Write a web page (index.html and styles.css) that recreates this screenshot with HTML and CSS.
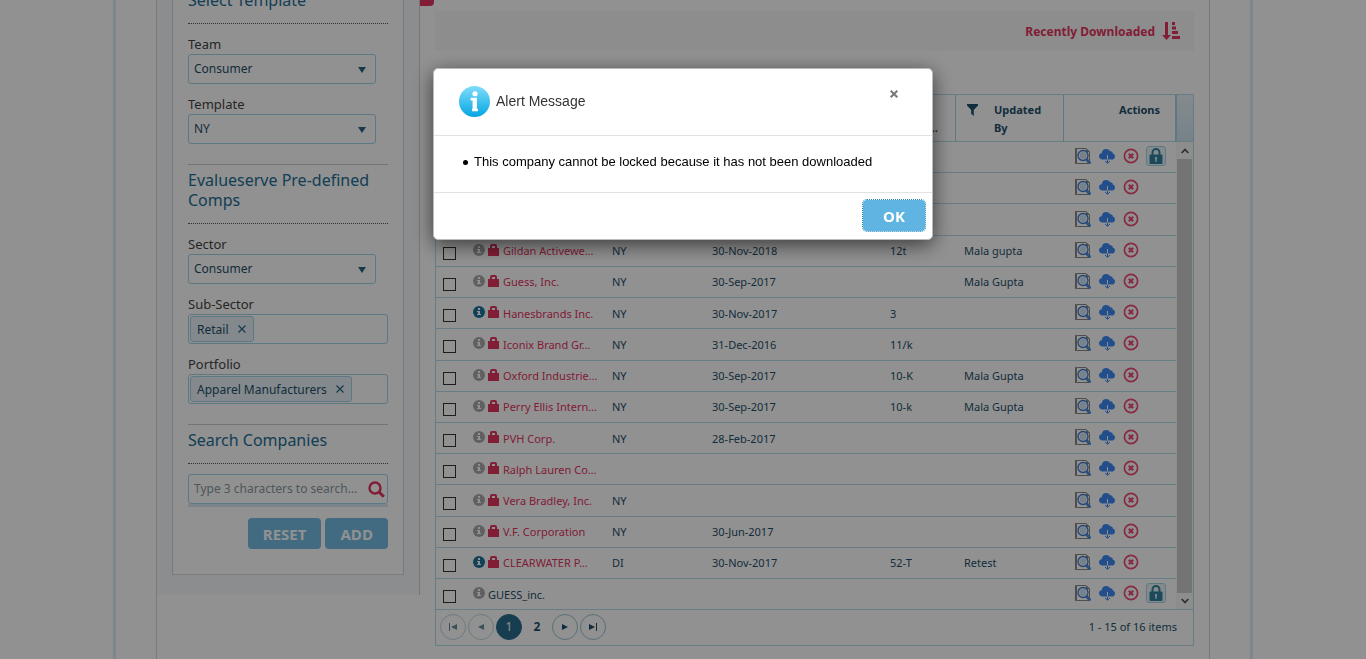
FILE: index.html
```html
<!DOCTYPE html>
<html lang="en">
<head>
<meta charset="utf-8">
<title>Company comps</title>
<link rel="stylesheet" href="styles.css">
</head>
<body>
<svg class="sprite" aria-hidden="true">
  <symbol id="info" viewBox="0 0 12 12"><circle cx="6" cy="6" r="6" fill="currentColor"/><path d="M5 2h2v2H5zM4 5h3v3h1v1H4V8h1V6H4z" fill="#fff"/></symbol>
  <symbol id="bag" viewBox="0 0 11 12"><path d="M0 4h2V2q0-2 2-2h3q2 0 2 2v2h2v8H0zM4 4h3V2H4z" fill="currentColor" fill-rule="evenodd"/></symbol>
  <symbol id="preview" viewBox="0 0 16 16"><path d="M1.500 .5H11l3.500 3.500v11.500H1.500z" fill="#fff" stroke="#8a8a8a" stroke-width="1"/><path d="M.500 0v16" stroke="#888" stroke-width="1"/><path d="M11 .500V4h4z" fill="#888"/><path d="M11.500 11.500l4 4" stroke="#4a8fd6" stroke-width="3"/><circle cx="8" cy="7.500" r="5" fill="#fff" stroke="#3b78d0" stroke-width="1.300"/><circle cx="8" cy="7.500" r="3.400" fill="#cfe3f6"/></symbol>
  <symbol id="cloud" viewBox="0 0 16 16"><path d="M3.500 11.500C1.500 11.500 0 10.300 0 8.300c0-1.700 1-2.800 2.700-3C3 2.500 4.800 1 7 1c2 0 3.300.8 4 2.300 1.500-.4 2.800.5 2.800 2.200C15.200 5.900 16 7 16 8.400c0 2-1.400 3.100-3.200 3.100z" fill="#3c8cf5"/><path d="M8.500 7v5" stroke="#fff" stroke-width="1"/><path d="M8.500 11.500v3.500M6 13l2.500 2.200L11 13" fill="none" stroke="#3c8cf5" stroke-width="1"/></symbol>
  <symbol id="remove" viewBox="0 0 16 16"><circle cx="8" cy="8" r="6.600" fill="none" stroke="#ee4c75" stroke-width="1.700"/><path d="M5.800 5.800l4.400 4.400m0-4.400l-4.400 4.400" stroke="#ee4c75" stroke-width="2.200"/></symbol>
  <symbol id="padlock" viewBox="0 0 14 16"><path d="M3.500 7V4.500a3.500 3.500 0 0 1 7 0V7" fill="none" stroke="#32829f" stroke-width="2"/><rect x=".5" y="6.500" width="13" height="9.500" rx="1" fill="#32829f"/><path d="M6 9h2v2l-.5 3h-1L6 11z" fill="#d9edf5"/></symbol>
</svg>

<div class="frame">
  <div class="page">
    <aside class="sidebar">
      <form class="panel">
        <section class="group first">
          <h2>Select Template</h2>
          <label for="team">Team</label>
          <div class="select"><select id="team"><option>Consumer</option></select></div>
          <label for="template">Template</label>
          <div class="select"><select id="template"><option>NY</option></select></div>
        </section>
        <section class="group">
          <h2>Evalueserve Pre-defined Comps</h2>
          <label for="sector">Sector</label>
          <div class="select"><select id="sector"><option>Consumer</option></select></div>
          <label for="subsector">Sub-Sector</label>
          <div class="chips"><span class="chip">Retail<button type="button" aria-label="Remove Retail"><svg viewBox="0 0 8 8"><path d="M.5.5l7 7m0-7l-7 7"/></svg></button></span><input id="subsector" type="text"></div>
          <label for="portfolio">Portfolio</label>
          <div class="chips"><span class="chip">Apparel Manufacturers<button type="button" aria-label="Remove Apparel Manufacturers"><svg viewBox="0 0 8 8"><path d="M.5.5l7 7m0-7l-7 7"/></svg></button></span><input id="portfolio" type="text"></div>
        </section>
        <section class="group">
          <h2>Search Companies</h2>
          <div class="search">
            <input type="text" placeholder="Type 3 characters to search…" aria-label="Search companies">
            <svg viewBox="0 0 17 17"><circle cx="7" cy="7" r="5.500" fill="none" stroke="#e4335f" stroke-width="2.400"/><path d="M11 11l4.800 4.800" stroke="#e4335f" stroke-width="3"/></svg>
          </div>
          <div class="buttons"><button type="button" class="btn">RESET</button><button type="button" class="btn">ADD</button></div>
        </section>
      </form>
    </aside>

    <main class="main">
      <span class="tab-edge"></span>
      <div class="toolbar">
        <a href="#">Recently Downloaded
          <svg viewBox="0 0 18 18"><path d="M3 0h3v13h3l-4.500 5L0 13h3zM10 0h3v3h-3zM10 4.500h4v3h-4zM10 9h6v3h-6zM10 14h8v3h-8z" fill="currentColor"/></svg></a>
      </div>

      <div class="grid">
        <div class="grid-body">
          <table>
            <colgroup><col class="c-check"><col class="c-name"><col class="c-tpl"><col class="c-date"><col class="c-ver"><col class="c-user"><col class="c-act"></colgroup>
            <thead><tr><th></th><th></th><th></th><th></th><th class="cut">…</th><th><div class="user-head"><svg viewBox="0 0 11 12"><path d="M0 0h11v1.500L6.800 6v6L4.200 9.800V6L0 1.500z" fill="currentColor"/></svg><span>Updated By</span></div></th><th class="act-head">Actions</th></tr></thead>
            <tbody>
              <tr><td></td><td></td><td></td><td></td><td></td><td></td><td><div class="acts"><svg><use href="#preview"/></svg><svg><use href="#cloud"/></svg><svg><use href="#remove"/></svg><button type="button" class="lock" aria-label="Lock"><svg><use href="#padlock"/></svg></button></div></td></tr>
              <tr><td></td><td></td><td></td><td></td><td></td><td></td><td><div class="acts"><svg><use href="#preview"/></svg><svg><use href="#cloud"/></svg><svg><use href="#remove"/></svg></div></td></tr>
              <tr><td></td><td></td><td></td><td></td><td></td><td></td><td><div class="acts"><svg><use href="#preview"/></svg><svg><use href="#cloud"/></svg><svg><use href="#remove"/></svg></div></td></tr>
              <tr><td><input type="checkbox" aria-label="Gildan"></td><td><div class="name"><svg class="info"><use href="#info"/></svg><svg class="bag"><use href="#bag"/></svg><a href="#">Gildan Activewe…</a></div></td><td>NY</td><td>30-Nov-2018</td><td>12t</td><td>Mala gupta</td><td><div class="acts"><svg><use href="#preview"/></svg><svg><use href="#cloud"/></svg><svg><use href="#remove"/></svg></div></td></tr>
              <tr><td><input type="checkbox" aria-label="Guess"></td><td><div class="name"><svg class="info"><use href="#info"/></svg><svg class="bag"><use href="#bag"/></svg><a href="#">Guess, Inc.</a></div></td><td>NY</td><td>30-Sep-2017</td><td></td><td>Mala Gupta</td><td><div class="acts"><svg><use href="#preview"/></svg><svg><use href="#cloud"/></svg><svg><use href="#remove"/></svg></div></td></tr>
              <tr><td><input type="checkbox" aria-label="Hanesbrands"></td><td><div class="name"><svg class="info on"><use href="#info"/></svg><svg class="bag"><use href="#bag"/></svg><a href="#">Hanesbrands Inc.</a></div></td><td>NY</td><td>30-Nov-2017</td><td>3</td><td></td><td><div class="acts"><svg><use href="#preview"/></svg><svg><use href="#cloud"/></svg><svg><use href="#remove"/></svg></div></td></tr>
              <tr><td><input type="checkbox" aria-label="Iconix"></td><td><div class="name"><svg class="info"><use href="#info"/></svg><svg class="bag"><use href="#bag"/></svg><a href="#">Iconix Brand Gr…</a></div></td><td>NY</td><td>31-Dec-2016</td><td>11/k</td><td></td><td><div class="acts"><svg><use href="#preview"/></svg><svg><use href="#cloud"/></svg><svg><use href="#remove"/></svg></div></td></tr>
              <tr><td><input type="checkbox" aria-label="Oxford"></td><td><div class="name"><svg class="info"><use href="#info"/></svg><svg class="bag"><use href="#bag"/></svg><a href="#">Oxford Industrie…</a></div></td><td>NY</td><td>30-Sep-2017</td><td>10-K</td><td>Mala Gupta</td><td><div class="acts"><svg><use href="#preview"/></svg><svg><use href="#cloud"/></svg><svg><use href="#remove"/></svg></div></td></tr>
              <tr><td><input type="checkbox" aria-label="Perry Ellis"></td><td><div class="name"><svg class="info"><use href="#info"/></svg><svg class="bag"><use href="#bag"/></svg><a href="#">Perry Ellis Intern…</a></div></td><td>NY</td><td>30-Sep-2017</td><td>10-k</td><td>Mala Gupta</td><td><div class="acts"><svg><use href="#preview"/></svg><svg><use href="#cloud"/></svg><svg><use href="#remove"/></svg></div></td></tr>
              <tr><td><input type="checkbox" aria-label="PVH"></td><td><div class="name"><svg class="info"><use href="#info"/></svg><svg class="bag"><use href="#bag"/></svg><a href="#">PVH Corp.</a></div></td><td>NY</td><td>28-Feb-2017</td><td></td><td></td><td><div class="acts"><svg><use href="#preview"/></svg><svg><use href="#cloud"/></svg><svg><use href="#remove"/></svg></div></td></tr>
              <tr><td><input type="checkbox" aria-label="Ralph Lauren"></td><td><div class="name"><svg class="info"><use href="#info"/></svg><svg class="bag"><use href="#bag"/></svg><a href="#">Ralph Lauren Co…</a></div></td><td></td><td></td><td></td><td></td><td><div class="acts"><svg><use href="#preview"/></svg><svg><use href="#cloud"/></svg><svg><use href="#remove"/></svg></div></td></tr>
              <tr><td><input type="checkbox" aria-label="Vera Bradley"></td><td><div class="name"><svg class="info"><use href="#info"/></svg><svg class="bag"><use href="#bag"/></svg><a href="#">Vera Bradley, Inc.</a></div></td><td>NY</td><td></td><td></td><td></td><td><div class="acts"><svg><use href="#preview"/></svg><svg><use href="#cloud"/></svg><svg><use href="#remove"/></svg></div></td></tr>
              <tr><td><input type="checkbox" aria-label="V.F."></td><td><div class="name"><svg class="info"><use href="#info"/></svg><svg class="bag"><use href="#bag"/></svg><a href="#">V.F. Corporation</a></div></td><td>NY</td><td>30-Jun-2017</td><td></td><td></td><td><div class="acts"><svg><use href="#preview"/></svg><svg><use href="#cloud"/></svg><svg><use href="#remove"/></svg></div></td></tr>
              <tr><td><input type="checkbox" aria-label="Clearwater"></td><td><div class="name"><svg class="info on"><use href="#info"/></svg><svg class="bag"><use href="#bag"/></svg><a href="#">CLEARWATER P…</a></div></td><td>DI</td><td>30-Nov-2017</td><td>52-T</td><td>Retest</td><td><div class="acts"><svg><use href="#preview"/></svg><svg><use href="#cloud"/></svg><svg><use href="#remove"/></svg></div></td></tr>
              <tr><td><input type="checkbox" aria-label="GUESS_inc."></td><td><div class="name"><svg class="info"><use href="#info"/></svg><span>GUESS_inc.</span></div></td><td></td><td></td><td></td><td></td><td><div class="acts"><svg><use href="#preview"/></svg><svg><use href="#cloud"/></svg><svg><use href="#remove"/></svg><button type="button" class="lock" aria-label="Lock"><svg><use href="#padlock"/></svg></button></div></td></tr>
            </tbody>
          </table>
          <div class="gutter">
            <div class="gutter-head"></div>
            <div class="scroll"><svg viewBox="0 0 8 6"><path d="M.7 5L4 1.500 7.300 5"/></svg><div class="thumb"></div><svg viewBox="0 0 8 6"><path d="M.7 1L4 4.500 7.300 1"/></svg></div>
          </div>
        </div>
        <div class="pager">
          <button type="button" class="off" aria-label="First page"><svg viewBox="0 0 10 8"><path d="M1 0h1v8H1zM9 1v6L3 4z"/></svg></button>
          <button type="button" class="off" aria-label="Previous page"><svg viewBox="0 0 10 8"><path d="M8 1v6L2 4z"/></svg></button>
          <button type="button" class="current">1</button>
          <button type="button" class="plain">2</button>
          <button type="button" aria-label="Next page"><svg viewBox="0 0 10 8"><path d="M2 1v6l6-3z"/></svg></button>
          <button type="button" aria-label="Last page"><svg viewBox="0 0 10 8"><path d="M8 0h1v8H8zM1 1v6l6-3z"/></svg></button>
          <span class="count">1 - 15 of 16 items</span>
        </div>
      </div>
    </main>
  </div>
</div>

<div class="overlay">
  <div class="modal" role="dialog" aria-labelledby="alert-title">
    <header class="modal-head">
      <svg class="alert-icon" viewBox="0 0 32 32"><defs><linearGradient id="g" x2="0" y2="1"><stop stop-color="#7fdcfa"/><stop offset="1" stop-color="#04a6e2"/></linearGradient></defs><circle cx="16" cy="16" r="16" fill="url(#g)"/><circle cx="16.500" cy="8" r="2.700" fill="#fff"/><path d="M12 12h6.500v11.500H19.500V26h-6v-2.500H14V15h-2z" fill="#fff"/></svg>
      <h1 id="alert-title">Alert Message</h1>
      <button type="button" class="close" aria-label="Close"><svg viewBox="0 0 8 8"><path d="M.7.7l6.600 6.600m0-6.600L.7 7.300" stroke="#777" stroke-width="2"/></svg></button>
    </header>
    <ul class="modal-body"><li>This company cannot be locked because it has not been downloaded</li></ul>
    <footer class="modal-foot"><button type="button" class="btn ok">OK</button></footer>
  </div>
</div>
</body>
</html>
```
FILE: styles.css
```css
* { box-sizing: border-box; }
html, body { height: 100%; }
body { margin: 0; overflow: hidden; background: #fff; color: #1f506b; font-family: "Noto Sans", sans-serif; font-size: 11px; }
button, input, select { font: inherit; color: inherit; margin: 0; }
button { padding: 0; border: 0; background: none; cursor: pointer; }
svg { display: block; flex: none; }
.sprite { position: absolute; width: 0; height: 0; }
a { color: #e4335f; text-decoration: none; }

.frame { max-width: 1140px; min-height: 100%; margin: 0 auto; padding: 0 40px; display: flex; border: solid #dcebf6; border-width: 0 3px; }
.page { flex: 1; display: flex; align-items: flex-start; border: solid #d4d6d8; border-width: 0 1px; }

.sidebar { width: 263px; flex: none; padding: 0 15px 20px; background: #f6f8fc; border-right: 1px solid #d0d2d4; }
.panel { padding: 0 15px 25px; background: #fff; border: 1px solid #d4d6d8; border-top: 0; }
.group { margin-top: 20px; padding-top: 5px; border-top: 1px solid #ccc; }
.group.first { margin-top: -10px; padding: 0; border: 0; }
h2 { margin: 0; padding-bottom: 13px; border-bottom: 1px dotted #555; font-size: 16px; font-weight: 400; line-height: 20px; color: #226e96; }
.group label { display: block; margin-top: 10px; font-size: 13px; line-height: 20px; color: #444; }
.select { position: relative; width: 94%; }
.select::after { content: ""; position: absolute; right: 10px; top: 13px; border: solid transparent; border-width: 6px 4px 0; border-top-color: #2b6580; }
select { appearance: none; display: block; width: 100%; height: 30px; padding: 0 5px 2px; border: 1px solid #a5d3e6; border-radius: 3px; background: #fff; font-size: 12px; }
.chips { display: flex; height: 30px; padding: 1px; border: 1px solid #a5d3e6; border-radius: 3px; }
.chips input { flex: 1; min-width: 0; width: 0; border: 0; padding: 0; background: none; }
.chip { display: flex; align-items: center; gap: 9px; padding: 0 7px 0 6px; border: 1px solid #a5d3e6; border-radius: 3px; background: #e6f1f7; font-size: 12px; }
.chip svg { width: 8px; height: 8px; stroke: #2b6580; stroke-width: 1.2; }
.search { display: flex; align-items: center; margin-top: 10px; position: relative; border-bottom: 3px solid #d8e8f2; }
.search input { width: 100%; height: 30px; padding: 0 20px 2px 5px; border: 1px solid #a5d3e6; border-radius: 3px; background: #fff; font-size: 12px; }
.search input::placeholder { color: #8a999f; opacity: 1; }
.search svg { position: absolute; right: 3px; width: 17px; height: 17px; }
.buttons { display: flex; justify-content: flex-end; gap: 4px; margin-top: 11px; }
.btn { height: 31px; padding: 0 15px; border-radius: 4px; background: #74bce3; color: #fff; font: 700 15px "Open Sans", sans-serif; }

.main { flex: 1; min-width: 0; padding: 11px 15px 0; position: relative; }
.tab-edge { position: absolute; left: 0; top: 0; width: 14px; height: 6px; background: #e4335f; border-radius: 0 0 4px 0; }
.toolbar { display: flex; justify-content: flex-end; align-items: center; height: 40px; padding: 0 14px; background: #f8f8f8; }
.toolbar a { display: flex; align-items: center; gap: 7px; font-size: 12px; font-weight: 700; }
.toolbar svg { width: 18px; height: 18px; }

.grid { margin-top: 43px; border: 1px solid #b5dcec; }
.grid-body { display: flex; border-bottom: 1px solid #b5dcec; }
table { flex: 1; height: 514px; table-layout: fixed; border-collapse: separate; border-spacing: 0; }
.c-check { width: 32px; } .c-name { width: 136px; } .c-tpl { width: 100px; } .c-date { width: 178px; } .c-ver { width: 74px; } .c-user { width: 108px; } .c-act { width: 112px; }
thead tr { height: 47px; }
th { padding: 6px 0 0; border-right: 1px solid #a5d3e6; border-bottom: 1px solid #b5dcec; vertical-align: top; text-align: left; line-height: 18px; color: #1f506b; }
.cut { padding: 24px 17px 0 0; text-align: right; }
.user-head { display: flex; gap: 16px; padding: 0 16px 0 11px; }
.user-head svg { width: 11px; height: 12px; margin-top: 3px; }
.act-head { padding-right: 15px; text-align: right; }
td { padding: 0 0 0 8px; border-bottom: 1px solid #b5dcec; white-space: nowrap; vertical-align: middle; }
tr:last-child td { border-bottom: 0; }
td:first-child { padding: 5px 0 0 7px; }
td:nth-child(2) { padding-left: 5px; }
td:last-child { padding: 0 0 2px 11px; }
input[type=checkbox] { appearance: none; display: block; width: 13px; height: 13px; border: 1px solid #333; }
.name { display: flex; align-items: center; gap: 3px; }
.name svg { margin-bottom: 2px; }
.info { width: 12px; height: 12px; color: #aaa; }
.info.on { color: #1f7199; }
.bag { width: 11px; height: 12px; color: #e4335f; margin-right: 1px; }
.acts { display: flex; align-items: center; gap: 8px; height: 20px; }
.acts svg { width: 16px; height: 16px; }
.acts .lock { display: flex; align-items: center; justify-content: center; width: 20px; height: 20px; margin-left: -1px; border: 1px solid #a5d3e6; border-radius: 3px; background: #eaf4f8; }
.gutter { display: flex; flex-direction: column; width: 17px; }
.gutter-head { height: 47px; border-bottom: 1px solid #b5dcec; border-left: 1px solid #a5d3e6; background: linear-gradient(#e9f3f9, #cfe5f0); }
.scroll { flex: 1; display: flex; flex-direction: column; align-items: center; gap: 5px; padding: 6px 1px 5px 1px; background: #f8f8f8; }
.scroll svg { width: 8px; height: 6px; fill: none; stroke: #555; stroke-width: 1.8; }
.thumb { flex: 1; width: 100%; background: #cdcdcd; }
.pager { display: flex; align-items: center; gap: 2px; height: 35px; padding: 0 16px 2px 4px; }
.pager button { display: flex; align-items: center; justify-content: center; width: 26px; height: 26px; border: 1px solid #9dc4d4; border-radius: 50%; }
.pager svg { width: 10px; height: 8px; fill: #1f506b; }
.pager .off { opacity: .65; }
.pager .current { border-color: #2a6e8d; background: #2a6e8d; color: #fff; font-size: 12px; }
.pager .plain { border-color: transparent; font-size: 12px; font-weight: 700; }
.count { margin-left: auto; }

.overlay { position: fixed; inset: 0; display: flex; justify-content: center; align-items: flex-start; padding: 68px 20px 0; background: rgba(0, 0, 0, .43); }
.modal { width: 500px; max-width: 100%; border: 1px solid #bbb; border-radius: 5px; background: #fff; box-shadow: 0 5px 20px rgba(0, 0, 0, .6); font-family: "Liberation Sans", Arial, sans-serif; color: #000; }
.modal-head { display: flex; align-items: center; gap: 6px; height: 67px; padding: 0 34px 2px 25px; border-bottom: 1px solid #e2e2e2; }
.alert-icon { width: 31px; height: 31px; }
h1 { margin: 0; font-size: 14px; font-weight: 400; color: #333; }
.close { margin: 0 0 14px auto; }
.close svg { width: 8px; height: 8px; }
.modal-body { margin: 0; padding: 16px 25px 20px 29px; font-size: 13px; line-height: 20px; border-bottom: 1px solid #e2e2e2; list-style: none; }
.modal-body li { display: flex; align-items: center; gap: 6px; }
.modal-body li::before { content: ""; width: 5px; height: 5px; border-radius: 50%; background: #000; }
.modal-foot { display: flex; justify-content: flex-end; padding: 7px 7px 8px; }
.ok { padding: 0 20px; background: #5fb4e1; outline: 1px dotted #2384bb; }
```
